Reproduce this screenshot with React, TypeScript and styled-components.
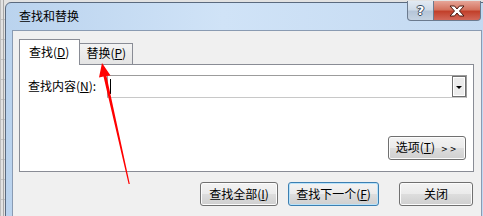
import React from 'react';
import styled, { createGlobalStyle } from 'styled-components';

const GlobalStyle = createGlobalStyle`
  html, body {
    margin: 0;
    padding: 0;
  }
  body {
    width: 483px;
    height: 216px;
    overflow: hidden;
    font-family: "Noto Sans CJK SC", "Noto Sans", sans-serif;
    font-size: 12px;
    color: #000;
  }
`;

const Desktop = styled.div`
  position: relative;
  width: 483px;
  height: 216px;
  overflow: hidden;
  padding: 2px 0 0 5px;
  box-sizing: border-box;
  background:
    linear-gradient(to right, #bdbdbd 0 1px, transparent 1px 3px, #a8a8a8 3px 4px, transparent 4px),
    repeating-linear-gradient(to bottom, #e2e2e2 0 19px, #c4c4c4 19px 20px);
`;

const Window = styled.div`
  width: 484px;
  height: 230px;
  box-sizing: border-box;
  border: 1px solid #5b6a7e;
  border-radius: 6px 6px 0 0;
  background: linear-gradient(to right, #bad3ee 0%, #d0e3f7 45%, #c3d9f1 100%);
  display: flex;
  flex-direction: column;
  padding: 0 6px;
`;

const TitleBar = styled.div`
  height: 27px;
  display: flex;
  align-items: flex-start;
`;

const Title = styled.div`
  flex: 1;
  padding: 5px 0 0 7px;
  line-height: 16px;
  font-size: 12px;
  color: #000;
`;

const CaptionButtons = styled.div`
  display: flex;
  margin-top: -2px;
  margin-right: 1px;
`;

const CaptionButton = styled.div<{ $close?: boolean }>`
  width: ${(p) => (p.$close ? '47px' : '27px')};
  height: 20px;
  box-sizing: border-box;
  border: 1px solid #6b7a8e;
  border-top: none;
  border-left: ${(p) => (p.$close ? 'none' : '1px solid #6b7a8e')};
  border-radius: ${(p) => (p.$close ? '0 0 4px 0' : '0 0 0 4px')};
  background: ${(p) =>
    p.$close
      ? 'linear-gradient(to bottom, #e6a598 0%, #d4735f 45%, #c2402b 55%, #d2685a 100%)'
      : 'linear-gradient(to bottom, #e2eaf3 0%, #cfdbe8 45%, #b5c5d8 55%, #c5d3e2 100%)'};
  display: flex;
  align-items: center;
  justify-content: center;
`;

const Help = styled.span`
  font-family: "DejaVu Sans", sans-serif;
  font-weight: bold;
  font-size: 13px;
  line-height: 13px;
  color: #fff;
  text-shadow: -1px 0 #3b4a5e, 1px 0 #3b4a5e, 0 -1px #3b4a5e, 0 1px #3b4a5e;
`;

const Content = styled.div`
  width: 470px;
  flex: 1;
  box-sizing: border-box;
  border: 1px solid #8a9bb2;
  background: #f0f0f0;
  padding: 8px 7px 0 6px;
  display: flex;
  flex-direction: column;
`;

const TabRow = styled.div`
  height: 25px;
  display: flex;
  align-items: flex-end;
`;

const Tab = styled.div<{ $active?: boolean }>`
  position: relative;
  z-index: ${(p) => (p.$active ? 1 : 0)};
  box-sizing: border-box;
  height: ${(p) => (p.$active ? '26px' : '21px')};
  margin-bottom: ${(p) => (p.$active ? '-1px' : '0')};
  margin-left: ${(p) => (p.$active ? '0' : '-1px')};
  padding: ${(p) => (p.$active ? '4px 10px 0 9px' : '1px 6px 0 6px')};
  border: 1px solid #898c95;
  border-bottom: none;
  background: ${(p) => (p.$active ? '#fff' : 'linear-gradient(to bottom, #f3f3f3, #e4e4e4)')};
  line-height: 16px;
  white-space: nowrap;
`;

const U = styled.span`
  text-decoration: underline;
  text-underline-offset: 1px;
`;

const Panel = styled.div`
  height: 108px;
  box-sizing: border-box;
  border: 1px solid #898c95;
  background: #fff;
  padding: 10px 6px 0 8px;
  display: flex;
  flex-direction: column;
`;

const FieldRow = styled.div`
  display: flex;
  align-items: center;
  justify-content: space-between;
`;

const Label = styled.label`
  line-height: 16px;
  margin-top: -1px;
`;

const Combo = styled.div`
  width: 360px;
  height: 23px;
  box-sizing: border-box;
  border: 1px solid #9c9c9c;
  border-bottom-color: #c8c8c8;
  background: #fff;
  display: flex;
  align-items: center;
  padding: 0 0 0 2px;
`;

const Caret = styled.span`
  width: 1px;
  height: 15px;
  background: #000;
`;

const DropButton = styled.div`
  margin-left: auto;
  width: 14px;
  height: 21px;
  box-sizing: border-box;
  border: 1px solid #6f6f6f;
  box-shadow: inset 0 0 0 1px #fff;
  background: #ececec;
  display: flex;
  align-items: center;
  justify-content: center;
`;

const Triangle = styled.span`
  width: 0;
  height: 0;
  border-left: 3px solid transparent;
  border-right: 3px solid transparent;
  border-top: 3px solid #000;
  margin-top: 2px;
`;

const OptionsRow = styled.div`
  display: flex;
  justify-content: flex-end;
  margin-top: 38px;
  padding-right: 1px;
`;

const Button = styled.button<{ $w: number; $default?: boolean; $push?: number }>`
  width: ${(p) => p.$w}px;
  height: 24px;
  box-sizing: border-box;
  margin: 0 0 0 ${(p) => p.$push ?? 0}px;
  padding: 0;
  font-family: inherit;
  font-size: 12px;
  color: #000;
  border: 1px solid ${(p) => (p.$default ? '#3c7fb1' : '#707070')};
  border-radius: 3px;
  box-shadow: inset 0 0 0 1px ${(p) => (p.$default ? '#b8e2fa' : '#fcfcfc')};
  background: linear-gradient(to bottom, #f3f3f3 0%, #ebebeb 48%, #dddddd 52%, #cfcfcf 100%);
  line-height: 16px;
  white-space: nowrap;
`;

const Arrows = styled.span`
  font-family: "DejaVu Sans", sans-serif;
  font-size: 8px;
  margin-left: 6px;
  letter-spacing: 2px;
`;

const Footer = styled.div`
  display: flex;
  justify-content: flex-end;
  margin-top: 10px;
  padding-right: 1px;
`;

const Pointer = styled.svg`
  position: absolute;
  left: 0;
  top: 0;
  pointer-events: none;
`;

export default function App() {
  return (
    <Desktop>
      <GlobalStyle />
      <Window>
        <TitleBar>
          <Title>查找和替换</Title>
          <CaptionButtons>
            <CaptionButton>
              <Help>?</Help>
            </CaptionButton>
            <CaptionButton $close>
              <svg width="16" height="12" viewBox="0 0 16 12">
                <path
                  d="M1 1h4.5l2.5 3 2.5-3H15l-4.5 5L15 11h-4.5L8 8l-2.5 3H1l4.5-5z"
                  fill="#fff"
                  stroke="#4a1a12"
                  strokeWidth="1"
                  strokeLinejoin="round"
                />
              </svg>
            </CaptionButton>
          </CaptionButtons>
        </TitleBar>
        <Content>
          <TabRow>
            <Tab $active>
              查找(<U>D</U>)
            </Tab>
            <Tab>
              替换(<U>P</U>)
            </Tab>
          </TabRow>
          <Panel>
            <FieldRow>
              <Label>
                查找内容(<U>N</U>):
              </Label>
              <Combo>
                <Caret />
                <DropButton>
                  <Triangle />
                </DropButton>
              </Combo>
            </FieldRow>
            <OptionsRow>
              <Button $w={78}>
                选项(<U>T</U>)<Arrows>&gt;&gt;</Arrows>
              </Button>
            </OptionsRow>
          </Panel>
          <Footer>
            <Button $w={78}>
              查找全部(<U>I</U>)
            </Button>
            <Button $w={91} $default $push={10}>
              查找下一个(<U>F</U>)
            </Button>
            <Button $w={74} $push={20}>
              关闭
            </Button>
          </Footer>
        </Content>
      </Window>
      <Pointer width="483" height="216" viewBox="0 0 483 216">
        <polygon
          points="102,63 110.5,75.5 106.5,76 129.8,184 128.6,184 103.5,76.5 99,77.5"
          fill="#ff0000"
        />
      </Pointer>
    </Desktop>
  );
}
